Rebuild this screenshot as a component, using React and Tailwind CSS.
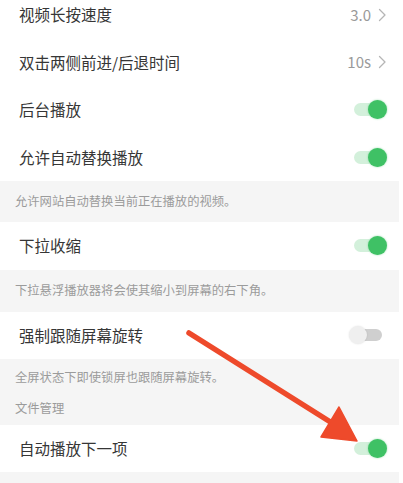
import React from 'react';

const font = { fontFamily: '"Noto Sans CJK SC", "Noto Sans", sans-serif' };

function Chevron() {
  return (
    <svg width="9" height="14" viewBox="0 0 9 14" className="ml-[7px]">
      <path d="M1.5 1.5 L7 7 L1.5 12.5" fill="none" stroke="#b5b5b5" strokeWidth="1.3" strokeLinecap="round" strokeLinejoin="round" />
    </svg>
  );
}

function Toggle({ on }) {
  if (on) {
    return (
      <div className="relative w-[33px] h-[20px] flex items-center">
        <div className="absolute left-0 right-[2px] h-[13px] rounded-full bg-[#d3f0db]" />
        <div className="absolute right-0 w-[19px] h-[19px] rounded-full bg-[#3fc165] shadow-[0_0_2px_rgba(63,193,101,0.6)]" />
      </div>
    );
  }
  return (
    <div className="relative w-[33px] h-[20px] flex items-center mr-[5px]">
      <div className="absolute left-[3px] right-0 h-[12px] rounded-full bg-[#cfcfcf]" />
      <div className="absolute left-0 w-[18px] h-[18px] rounded-full bg-[#efefef] shadow-[0_0_2px_rgba(0,0,0,0.12)]" />
    </div>
  );
}

function Row({ label, value, toggle, h = 'h-[47.5px]' }) {
  return (
    <div className={`${h} bg-white flex items-center pl-[19px] pr-[12px]`}>
      <span className="flex-1 text-[15.5px] text-[#363636]">{label}</span>
      {value && (
        <span className="flex items-center text-[15px] text-[#9a9a9a]">
          {value}
          <Chevron />
        </span>
      )}
      {toggle !== undefined && <Toggle on={toggle} />}
    </div>
  );
}

function Note({ children, h }) {
  return (
    <div className={`${h} bg-[#f5f5f5] flex items-center pl-[15px] text-[12.3px] text-[#9b9b9b]`}>
      {children}
    </div>
  );
}

export default function App() {
  return (
    <div className="relative w-[403px] h-[483px] overflow-hidden bg-white" style={font}>
      <div className="w-[399px] -mt-[9px]">
        <Row label="视频长按速度" value="3.0" />
        <Row label="双击两侧前进/后退时间" value="10s" />
        <Row label="后台播放" toggle={true} />
        <Row label="允许自动替换播放" toggle={true} />
        <Note h="h-[41px]">允许网站自动替换当前正在播放的视频。</Note>
        <Row label="下拉收缩" toggle={true} />
        <Note h="h-[42px]">下拉悬浮播放器将会使其缩小到屏幕的右下角。</Note>
        <Row label="强制跟随屏幕旋转" toggle={false} />
        <div className="h-[66px] bg-[#f5f5f5] flex flex-col pl-[15px] text-[12.3px] text-[#9b9b9b]">
          <div className="h-[36px] flex items-center">全屏状态下即使锁屏也跟随屏幕旋转。</div>
          <div className="h-[26px] flex items-center">文件管理</div>
        </div>
        <Row label="自动播放下一项" toggle={true} h="h-[47px]" />
        <div className="h-[20px] bg-[#f5f5f5]" />
      </div>

      {/* red annotation arrow */}
      <svg className="absolute left-0 top-0 pointer-events-none" width="403" height="483" viewBox="0 0 403 483">
        <line x1="189" y1="333" x2="332" y2="423" stroke="#ee4a2b" strokeWidth="5.5" strokeLinecap="round" />
        <polygon points="339,407 321,437 357,441" fill="#ee4a2b" stroke="#ee4a2b" strokeWidth="1.5" strokeLinejoin="round" />
      </svg>
    </div>
  );
}
